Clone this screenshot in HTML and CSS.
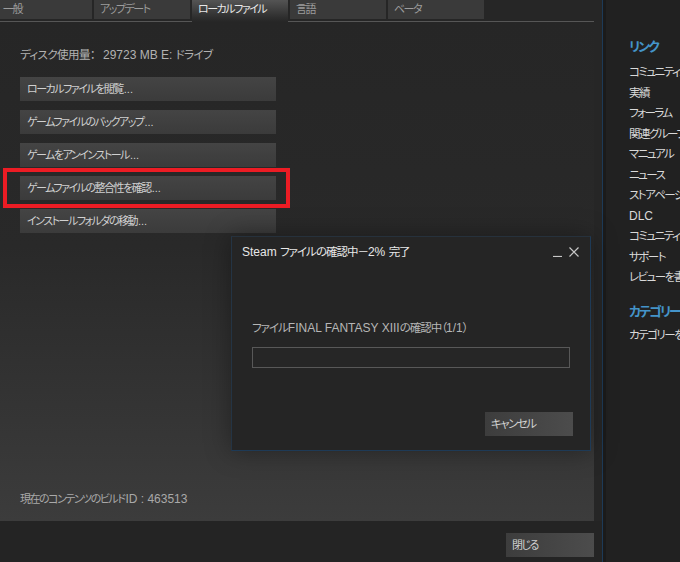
FILE: index.html
```html
<!DOCTYPE html>
<html lang="ja">
<head>
    <meta charset="UTF-8">
    <title>プロパティ - ローカルファイル</title>
<link rel="stylesheet" href="styles.css">
</head>

<body>
    <div class="main">
        <div class="tabs">
            <div class="tab first">一般</div>
            <div class="tab">アップデート</div>
            <div class="tab active">ローカルファイル</div>
            <div class="tab">言語</div>
            <div class="tab">ベータ</div>
        </div>

        <div class="panel">
            <div class="disk">ディスク使用量：<span class="en size">29723 MB E: </span>ドライブ</div>
            <div class="actions">
                <div class="btn">ローカルファイルを閲覧<span class="dots">...</span></div>
                <div class="btn">ゲームファイルのバックアップ<span class="dots">...</span></div>
                <div class="btn">ゲームをアンインストール<span class="dots">...</span></div>
                <div class="btn highlight">ゲームファイルの整合性を確認<span class="dots">...</span></div>
                <div class="btn">インストールフォルダの移動<span class="dots">...</span></div>
            </div>
            <div class="build">現在のコンテンツのビルド<span class="en">ID : 463513</span></div>
        </div>

        <div class="footer">
            <div class="btn close-btn">閉じる</div>
        </div>

        <div class="dialog">
            <div class="dialog-title">
                <span><span class="en">Steam </span>ファイルの確認中－<span class="en">2% </span>完了</span>
                <span class="win-ctrl">
                    <svg width="9" height="10" viewBox="0 0 9 10"><path d="M0 9.5h9" stroke="#c8c8c8" stroke-width="1.2"/></svg>
                    <svg width="10" height="10" viewBox="0 0 10 10"><path d="M0.5 0.5l9 9M9.5 0.5l-9 9" stroke="#c8c8c8" stroke-width="1.2"/></svg>
                </span>
            </div>
            <div class="dialog-body">
                <div class="progress-label">ファイル<span class="en">FINAL FANTASY XIII</span>の確認中（<span class="en">1/1</span>）</div>
                <div class="progress"></div>
                <div class="btn cancel-btn">キャンセル</div>
            </div>
        </div>
    </div>

    <div class="sidebar">
        <div class="side-head">リンク</div>
        <div class="side-item">コミュニティハブ</div>
        <div class="side-item">実績</div>
        <div class="side-item">フォーラム</div>
        <div class="side-item">関連グループ</div>
        <div class="side-item">マニュアル</div>
        <div class="side-item">ニュース</div>
        <div class="side-item">ストアページ</div>
        <div class="side-item"><span class="en">DLC</span></div>
        <div class="side-item">コミュニティガイド</div>
        <div class="side-item">サポート</div>
        <div class="side-item">レビューを書く</div>
        <div class="side-head cat">カテゴリー</div>
        <div class="side-item">カテゴリーを設定...</div>
    </div>
</body>
</html>
```

FILE: styles.css
```css
body {
    margin: 0;
    width: 680px;
    height: 562px;
    overflow: hidden;
    display: flex;
    background-color: #212121;
    font-family: "Liberation Sans", "Noto Sans CJK JP", sans-serif;
    font-size: 11px;
    letter-spacing: -1.5px;
    font-feature-settings: "palt";
}
.en {
    font-size: 12px;
    letter-spacing: 0;
}
.dots {
    letter-spacing: 0;
    padding-left: 1px;
}
.main {
    position: relative;
    width: 602px;
    flex: none;
    display: flex;
    flex-direction: column;
    background-color: #262626;
    border-right: 1px solid #1d3a57;
}

/* tabs */
.tabs {
    display: flex;
    gap: 2px;
    width: 594px;
    height: 21px;
    align-items: flex-start;
    border-bottom: 1px solid #565656;
}
.tab {
    width: 90px;
    height: 19px;
    padding-left: 6px;
    line-height: 19px;
    background-color: #3a3a3a;
    color: #9c9c9c;
}
.tab.first {
    margin-left: -4px;
    padding-left: 7px;
    width: 89px;
}
.tab.active {
    height: 22px;
    background: linear-gradient(to bottom, #545454, #2e2e2e 80%, #262626);
    color: #e8e8e8;
}

/* local files panel */
.panel {
    width: 574px;
    height: 474px;
    padding: 25px 0 0 20px;
    display: flex;
    flex-direction: column;
    background: linear-gradient(to bottom, #262626 0%, #292929 45%, #3c3c3c 100%);
}
.disk {
    font-size: 11.5px;
    letter-spacing: -0.6px;
    line-height: 16px;
    color: #b2b2b2;
}
.disk .size {
    padding-left: 8px;
}
.actions {
    display: flex;
    flex-direction: column;
    gap: 9px;
    margin-top: 14px;
}
.btn {
    position: relative;
    width: 249px;
    height: 24px;
    padding-left: 7px;
    line-height: 24px;
    color: #d0d0d0;
    background: linear-gradient(to bottom, #444444, #3b3b3b);
}
.btn.highlight::after {
    content: "";
    position: absolute;
    left: -17px;
    right: -14px;
    top: -8px;
    bottom: -8px;
    border: 4px solid #ec1c24;
}
.build {
    margin-top: auto;
    margin-bottom: 14px;
    line-height: 16px;
    color: #a9a9a9;
}
.build .en {
    padding-left: 1px;
}

.footer {
    flex: 1;
    display: flex;
    justify-content: flex-end;
    padding: 12px 8px 0 0;
    background-color: #242424;
}
.close-btn, .cancel-btn {
    width: 82px;
    padding-left: 6px;
    background: linear-gradient(to right, #3d3d3d, #4c4c4c);
}

/* verify dialog */
.dialog {
    position: absolute;
    left: 231px;
    top: 236px;
    width: 358px;
    height: 213px;
    display: flex;
    flex-direction: column;
    font-size: 11.5px;
    letter-spacing: -1px;
    background-color: #252525;
    border: 1px solid #1e3a56;
    border-top-color: #26313c;
    border-left-color: #243444;
    box-shadow: 0 0 24px rgba(0, 0, 0, 0.35);
}
.dialog-title {
    height: 28px;
    padding: 0 11px 0 10px;
    display: flex;
    justify-content: space-between;
    align-items: center;
    color: #e8e8e8;
}
.win-ctrl {
    display: flex;
    gap: 7px;
    align-items: flex-end;
    padding-top: 2px;
}
.dialog-body {
    display: flex;
    flex-direction: column;
    padding: 0 20px;
}
.progress-label {
    margin-top: 55px;
    line-height: 16px;
    color: #b6b6b6;
}
.progress {
    margin-top: 11px;
    width: 316px;
    height: 19px;
    border: 1px solid #585858;
    background-color: #262626;
}
.cancel-btn {
    align-self: flex-end;
    margin-top: 44px;
    margin-right: -3px;
    letter-spacing: -1.5px;
}

/* links column */
.sidebar {
    flex: 1;
    padding: 37px 0 0 23px;
    border-left: 3px solid #1b1b1b;
    white-space: nowrap;
    overflow: hidden;
    color: #d9d9d9;
}
.side-head {
    font-size: 13px;
    font-weight: bold;
    letter-spacing: -2px;
    line-height: 20px;
    color: #4494c9;
    margin-bottom: 5px;
}
.side-head.cat {
    margin-top: 14px;
    margin-bottom: 3px;
}
.side-item {
    font-size: 11.5px;
    line-height: 20.5px;
}
```
